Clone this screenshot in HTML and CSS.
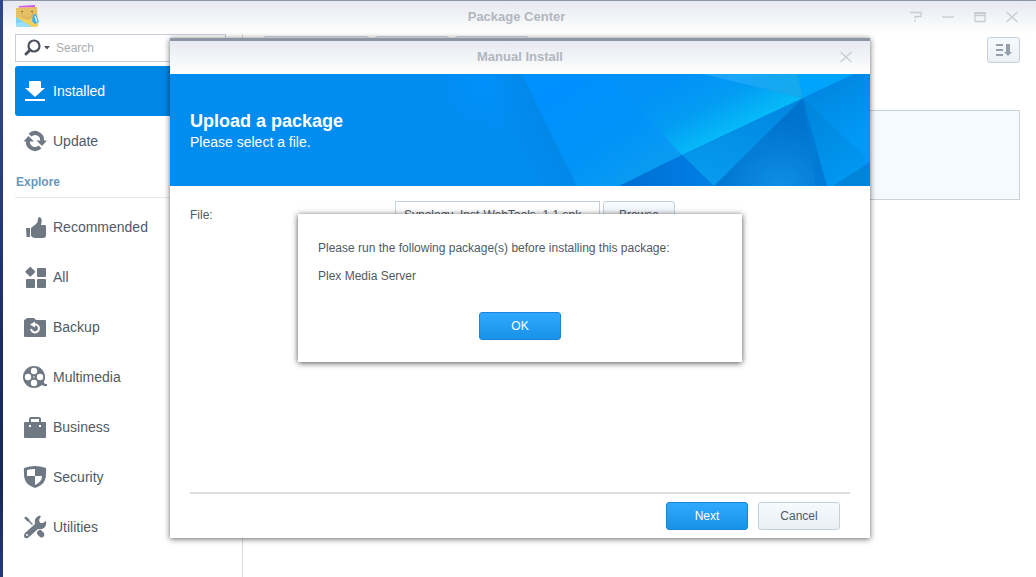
FILE: index.html
```html
<!DOCTYPE html>
<html lang="en">
<head>
<meta charset="utf-8">
<title>Package Center</title>
<link rel="stylesheet" href="styles.css">
</head>
<body>
<div class="window">
  <header class="titlebar">
    <svg class="app-icon" viewBox="0 0 24 24" aria-hidden="true">
      <path d="M4 1l16-1v6H3z" fill="#cf5bea"/>
      <path d="M4 2h13v3H4z" fill="#f0a0c8"/>
      <path d="M1 3l21-1 1 17q0 3-3 3H4q-3 0-3-3z" fill="#e6c163"/>
      <path d="M1 12l11 3 11-2v6q0 3-3 3H4q-3 0-3-3z" fill="#f2d25c"/>
      <path d="M1 12l16 10H4q-3 0-3-3z" fill="#7fd3f7"/>
      <path d="M1 18l8-1 8 5H4q-3 0-3-3z" fill="#9ae0fa"/>
      <path d="M6.500 7q0 6 5.500 6t6-6" fill="none" stroke="#d8a65c"/>
      <path d="M6 6h2v1H6zM16 6h2v1h-2z" fill="#8a6530"/>
      <path d="M18 10l3-1 3 8-4 2-3-3z" fill="#3fb0ea"/>
      <path d="M20 11l2 6" stroke="#d8f2ff" stroke-width="1.5"/>
    </svg>
    <h1 class="title">Package Center</h1>
    <div class="window-controls">
      <button type="button" aria-label="Help"><svg viewBox="0 0 12 12"><path d="M0 1.500h11v4H5v2M5 9v2" /></svg></button>
      <button type="button" aria-label="Minimize"><svg viewBox="0 0 12 12"><path d="M0 6h12"/></svg></button>
      <button type="button" aria-label="Maximize"><svg viewBox="0 0 12 12"><path d="M0 2h12" stroke-width="2"/><path d="M1 3v7.500h10V3M1 4.500h10"/></svg></button>
      <button type="button" aria-label="Close"><svg viewBox="0 0 12 12"><path d="M.5 1l11 10M11.500 1L.5 11"/></svg></button>
    </div>
  </header>

  <div class="columns">
    <aside class="sidebar">
      <label class="search">
        <svg class="search-icon" viewBox="0 0 28 18" aria-hidden="true">
          <circle cx="11" cy="7" r="5.500" fill="none" stroke="#4b545e" stroke-width="2.2"/>
          <path d="M7 11l-4 4" stroke="#4b545e" stroke-width="3" stroke-linecap="round"/>
          <path d="M21 7h6l-3 3.500z" fill="#4b545e"/>
        </svg>
        <input type="text" placeholder="Search" aria-label="Search">
      </label>
      <nav class="nav">
        <a class="nav-item selected" href="#installed">
          <svg class="icon" viewBox="0 0 24 24"><path d="M6 3q0-1 1-1h10q1 0 1 1v6h4L12 18 2 9h4zM2 20h20v2H2z"/></svg>Installed</a>
        <a class="nav-item" href="#update">
          <svg class="icon" viewBox="0 0 24 24"><g fill="none" stroke="#6f7984" stroke-width="4"><path d="M7 6.200a7 7 0 0 1 12 5.800"/><path d="M17 17.800a7 7 0 0 1-12-5.800"/></g><path d="M13.500 11.500H24L19 17zM.5 12.500H11L5.500 7z"/></svg>Update</a>
        <h2 class="nav-heading">Explore</h2>
        <a class="nav-item" href="#recommended">
          <svg class="icon" viewBox="0 0 24 24"><path d="M3 13h4v9H3.500zM8 13l5-4q2-2 2-5 0-2 1.500-2 3.500 1 1.500 8h4q1 0 1 2v8q0 3-3 3h-8q-2 0-4-2z"/></svg>Recommended</a>
        <a class="nav-item" href="#all">
          <svg class="icon" viewBox="0 0 24 24"><rect x="3.500" y="3" width="7.500" height="7.500" rx="1" transform="rotate(45 7.250 6.750)"/><rect x="14" y="3" width="9" height="9" rx="1"/><rect x="3" y="14" width="9" height="9" rx="1"/><rect x="14" y="14" width="9" height="9" rx="1"/></svg>All</a>
        <a class="nav-item" href="#backup">
          <svg class="icon" viewBox="0 0 24 24"><path d="M1 5l2-1 1-1h7l2 2h9q1 0 1 1v15q0 1-1 1H2q-1 0-1-1z"/><path d="M11 9.500a4 4 0 1 1-3 4.500" fill="none" stroke="#fff" stroke-width="2"/><path d="M12 6.500v6L7 9.500z" fill="#fff"/></svg>Backup</a>
        <a class="nav-item" href="#multimedia">
          <svg class="icon" viewBox="0 0 24 24"><path d="M15 21l5-5 2 3h2v2h-3l-2-1z"/><circle cx="11" cy="12" r="11"/><g fill="#fff"><circle cx="11" cy="6" r="3.200"/><circle cx="5" cy="12" r="3.200"/><circle cx="17" cy="12" r="3.200"/><circle cx="11" cy="18" r="3.200"/><circle cx="11" cy="12" r=".8"/></g></svg>Multimedia</a>
        <a class="nav-item" href="#business">
          <svg class="icon" viewBox="0 0 24 24"><path d="M7 8V4q0-1 1-1h8q1 0 1 1v4" fill="none" stroke="#6f7984" stroke-width="2"/><rect x="1" y="7" width="22" height="16" rx="1"/><path d="M6 10h2v2H6zM16 10h2v2h-2z" fill="#fff"/></svg>Business</a>
        <a class="nav-item" href="#security">
          <svg class="icon" viewBox="0 0 24 24"><path d="M1 3q11-4 22 0 1 14-5 17-3 2-6 3-3-1-6-3Q0 17 1 3z"/><path d="M4 5q4-1 8-1v7h7q0 6-7 9v-9H4z" fill="#fff"/></svg>Security</a>
        <a class="nav-item" href="#utilities">
          <svg class="icon" viewBox="0 0 24 24"><path d="M1 3l2-1.500L6 4l1 2 3 3-1 1-3-3-2-1zM14 17l2-2 2 0 3 3q1 3-1 4-2 1-3 0l-3-3z"/><path d="M2 18L12 9q-1-5 2-7 2-2 4-1l-2 4 1 3 3 0 3-2q1 4-2 7-3 2-6 1l-9 8q-2 2-4 1-2-2 0-5z"/><circle cx="4" cy="20" r="1" fill="#fff"/></svg>Utilities</a>
      </nav>
    </aside>

    <main class="content">
      <div class="toolbar">
        <button class="btn tool tool-wide" type="button" aria-label="Manual Install"></button>
        <button class="btn tool" type="button" aria-label="Settings"></button>
        <button class="btn tool" type="button" aria-label="Refresh"></button>
        <button class="btn sort" type="button" aria-label="Sort">
          <svg viewBox="0 0 16 12"><path d="M0 0h7v2H0zM0 5h7v2H0zM0 10h7v2H0zM10 0h4v8h2l-4 4-4-4h2z"/></svg>
        </button>
      </div>
      <div class="package-panel"></div>
    </main>
  </div>

  <div class="overlay">
    <section class="dialog" role="dialog" aria-labelledby="dialog-title">
      <header class="dialog-bar">
        <h2 class="title" id="dialog-title">Manual Install</h2>
        <div class="window-controls dialog-controls">
          <button type="button" aria-label="Close"><svg viewBox="0 0 12 12"><path d="M.5 1l11 10M11.500 1L.5 11"/></svg></button>
        </div>
      </header>
      <div class="banner">
        <svg class="banner-art" viewBox="0 0 700 112" preserveAspectRatio="xMaxYMid slice" aria-hidden="true">
          <defs>
            <radialGradient id="glow" gradientUnits="userSpaceOnUse" cx="325" cy="0" r="60"><stop offset="0" stop-color="#0091ff"/><stop offset="1" stop-color="#0091ff" stop-opacity="0"/></radialGradient>
            <linearGradient id="edge" gradientUnits="userSpaceOnUse" x1="345" y1="72" x2="381" y2="54"><stop offset="0" stop-color="#0288e8" stop-opacity="0"/><stop offset="1" stop-color="#0288e8"/></linearGradient>
            <linearGradient id="g1" gradientUnits="userSpaceOnUse" x1="400" y1="0" x2="470" y2="112"><stop offset="0" stop-color="#0090ff"/><stop offset=".6" stop-color="#0293f8"/><stop offset="1" stop-color="#0a9df0"/></linearGradient>
            <linearGradient id="g2" gradientUnits="userSpaceOnUse" x1="520" y1="0" x2="552" y2="64"><stop offset="0" stop-color="#0292f7"/><stop offset=".5" stop-color="#039cf3"/><stop offset="1" stop-color="#06bbf8"/></linearGradient>
            <linearGradient id="g3"><stop offset="0" stop-color="#1ca4ff"/><stop offset="1" stop-color="#14a9ec"/></linearGradient>
            <linearGradient id="g4" x1=".6" y1="0" x2=".4" y2="1"><stop offset="0" stop-color="#0087e2"/><stop offset="1" stop-color="#079bee"/></linearGradient>
            <linearGradient id="g5"><stop offset="0" stop-color="#006dd3"/><stop offset="1" stop-color="#0080e4"/></linearGradient>
            <radialGradient id="g6" gradientUnits="userSpaceOnUse" cx="610" cy="118" r="70"><stop offset="0" stop-color="#0f90e8"/><stop offset="1" stop-color="#0073ce"/></radialGradient>
            <linearGradient id="g7" gradientUnits="userSpaceOnUse" x1="670" y1="5" x2="700" y2="60"><stop offset="0" stop-color="#0088e3"/><stop offset="1" stop-color="#009af5"/></linearGradient>
            <linearGradient id="g8" gradientUnits="userSpaceOnUse" x1="633" y1="24" x2="685" y2="100"><stop offset="0" stop-color="#0083d8"/><stop offset="1" stop-color="#0097f2"/></linearGradient>
          </defs>
          <path fill="#018cef" d="M0 0h700v112H0z"/>
          <path fill="url(#glow)" d="M250 0h102l55 112H250z"/>
          <path fill="url(#edge)" d="M310 0h42l55 112h-42z"/>
          <path fill="url(#g1)" d="M352 0h88l72 81-63 31h-42z"/>
          <path fill="url(#g2)" d="M438 0h95l100 24-121 57z"/>
          <path fill="url(#g3)" d="M533 0h95l5 24z"/>
          <path fill="#00a5fb" d="M628 0h56l-51 24z"/>
          <path fill="url(#g7)" d="M684 0h16v88l-67-64z"/>
          <path fill="url(#g4)" d="M633 24l-89 88-32-31z"/>
          <path fill="url(#g5)" d="M512 81l32 31h-95z"/>
          <path fill="url(#g6)" d="M633 24l24 88H544z"/>
          <path fill="#007bd5" d="M633 24l24 88h-11z"/>
          <path fill="url(#g8)" d="M633 24l67 64-37 24h-6z"/>
          <path fill="#0084da" d="M700 88v24h-37z"/>
        </svg>
        <div class="banner-text">
          <h3>Upload a package</h3>
          <p>Please select a file.</p>
        </div>
      </div>
      <form class="form">
        <label for="file">File:</label>
        <input class="file-name" id="file" type="text" value="Synology_Inst-WebTools_1.1.spk" readonly>
        <button class="btn browse" type="button">Browse</button>
      </form>
      <footer class="dialog-footer">
        <button class="btn btn-primary" type="button">Next</button>
        <button class="btn" type="button">Cancel</button>
      </footer>
    </section>
  </div>

  <div class="overlay">
    <section class="alert" role="alertdialog" aria-label="Message">
      <p>Please run the following package(s) before installing this package:</p>
      <p>Plex Media Server</p>
      <button class="btn btn-primary" type="button">OK</button>
    </section>
  </div>
</div>
</body>
</html>
```

FILE: styles.css
```css
* {
  box-sizing: border-box;
}

body {
  margin: 0;
  padding-left: 3px;
  min-height: 100vh;
  background: linear-gradient(#2e4690, #2c4088 25%, #1b2b62 60%, #1a2858 85%, #26397c);
  color: #505a64;
  font: 12px/16px "Liberation Sans", Arial, sans-serif;
}

h1, h2, h3, p {
  margin: 0;
}

button, input {
  font: inherit;
  color: inherit;
}

.window {
  position: relative;
  display: flex;
  flex-direction: column;
  min-height: 100vh;
  background: #fff;
}

.titlebar {
  display: grid;
  grid-template-columns: 1fr auto 1fr;
  align-items: center;
  height: 34px;
  padding: 0 18px 2px 12px;
  border-top: 1px solid #8b95a3;
  background: linear-gradient(#e6e9f0, #fff);
}

.app-icon {
  width: 24px;
  height: 24px;
}

.title {
  color: #b0b7bf;
  font-size: 13px;
  font-weight: bold;
  text-align: center;
}

.window-controls {
  display: flex;
  justify-content: flex-end;
  gap: 20px;
}

.window-controls button {
  display: block;
  width: 12px;
  height: 12px;
  padding: 0;
  border: 0;
  background: none;
}

.window-controls svg {
  display: block;
  width: 12px;
  height: 12px;
  fill: none;
  stroke: #c9cbcf;
  stroke-width: 1.3;
}

.columns {
  display: flex;
  flex: 1;
}

.sidebar {
  flex: none;
  width: 240px;
  padding: 0 16px 0 12px;
  border-right: 1px solid #d8dadd;
}

.search {
  display: flex;
  align-items: center;
  height: 28px;
  padding-left: 7px;
  border: 1px solid #c6d0db;
}

.search-icon {
  flex: none;
  width: 28px;
  height: 18px;
}

.search input {
  width: 100%;
  min-width: 0;
  padding: 0 5px;
  border: 0;
  outline: 0;
  background: none;
}

.search input::placeholder {
  color: #a9adb2;
}

.nav {
  padding-top: 4px;
}

.nav-item {
  display: flex;
  align-items: center;
  gap: 6px;
  height: 50px;
  padding-left: 8px;
  border-radius: 3px;
  color: #505a64;
  font-size: 14px;
  text-decoration: none;
}

.nav-item.selected {
  background: #0086e5;
  color: #fff;
}

.icon {
  width: 24px;
  height: 24px;
  fill: #6f7984;
}

.selected .icon {
  fill: #fff;
}

.nav-heading {
  height: 32px;
  margin-bottom: 4px;
  padding-left: 1px;
  border-bottom: 1px solid #e6e9ec;
  color: #6698b8;
  font-size: 12px;
  line-height: 32px;
}

.content {
  flex: 1;
  min-width: 0;
  padding: 2px 16px 0 20px;
}

.toolbar {
  display: flex;
  gap: 6px;
}

.btn {
  width: 82px;
  height: 28px;
  padding: 0;
  border: 1px solid #c6d0db;
  border-radius: 3px;
  background: linear-gradient(#f5faff, #ebf0f4);
}

.btn-primary {
  border-color: #1a84d8;
  background: linear-gradient(#30a8ff, #1893ea);
  color: #fff;
}

.tool {
  width: 74px;
}

.tool-wide {
  width: 106px;
}

.sort {
  display: grid;
  place-items: center;
  width: 33px;
  height: 26px;
  margin: 1px 0 0 auto;
}

.sort svg {
  width: 16px;
  height: 12px;
  fill: #96a0ac;
}

.package-panel {
  height: 90px;
  margin-top: 46px;
  border: 1px solid #c9d1d9;
  background: #f5faff;
}

.overlay {
  position: absolute;
  inset: 0;
  display: grid;
  place-items: center;
  padding: 0 0 1px 1px;
}

.dialog {
  display: flex;
  flex-direction: column;
  width: min(700px, 96%);
  min-height: 500px;
  background: #fff;
  box-shadow: 0 1px 6px rgba(0, 0, 0, 0.6);
}

.dialog-bar {
  display: grid;
  grid-template-columns: 1fr auto 1fr;
  align-items: center;
  height: 36px;
  padding: 0 18px 2px;
  border-top: 3px solid #8b95a3;
  background: linear-gradient(#e6e9f0, #fff);
}

.dialog-bar .title {
  grid-column: 2;
}

.banner {
  position: relative;
  height: 112px;
  padding: 36px 20px 0;
  background: #018cef;
  color: #fff;
}

.banner-art {
  position: absolute;
  inset: 0;
  width: 100%;
  height: 100%;
}

.banner-text {
  position: relative;
}

.banner h3 {
  font-size: 18px;
  line-height: 22px;
}

.banner p {
  font-size: 14px;
  line-height: 20px;
}

.form {
  display: flex;
  flex: 1;
  align-items: flex-start;
  padding: 15px 20px;
}

.form label {
  width: 205px;
  line-height: 28px;
}

.file-name {
  width: 205px;
  height: 28px;
  margin-right: 3px;
  padding: 0 8px;
  border: 1px solid #c6d0db;
  background: #fff;
}

.browse {
  width: 72px;
}

.dialog-footer {
  display: flex;
  justify-content: flex-end;
  gap: 10px;
  margin: 0 20px;
  padding: 8px 10px;
  border-top: 2px solid #dddfe1;
}

.alert {
  display: flex;
  flex-direction: column;
  gap: 12px;
  width: min(444px, 90%);
  padding: 26px 20px 22px;
  background: #fff;
  box-shadow: 0 1px 6px rgba(0, 0, 0, 0.7);
}

.alert .btn {
  align-self: center;
  margin-top: 16px;
}
```
